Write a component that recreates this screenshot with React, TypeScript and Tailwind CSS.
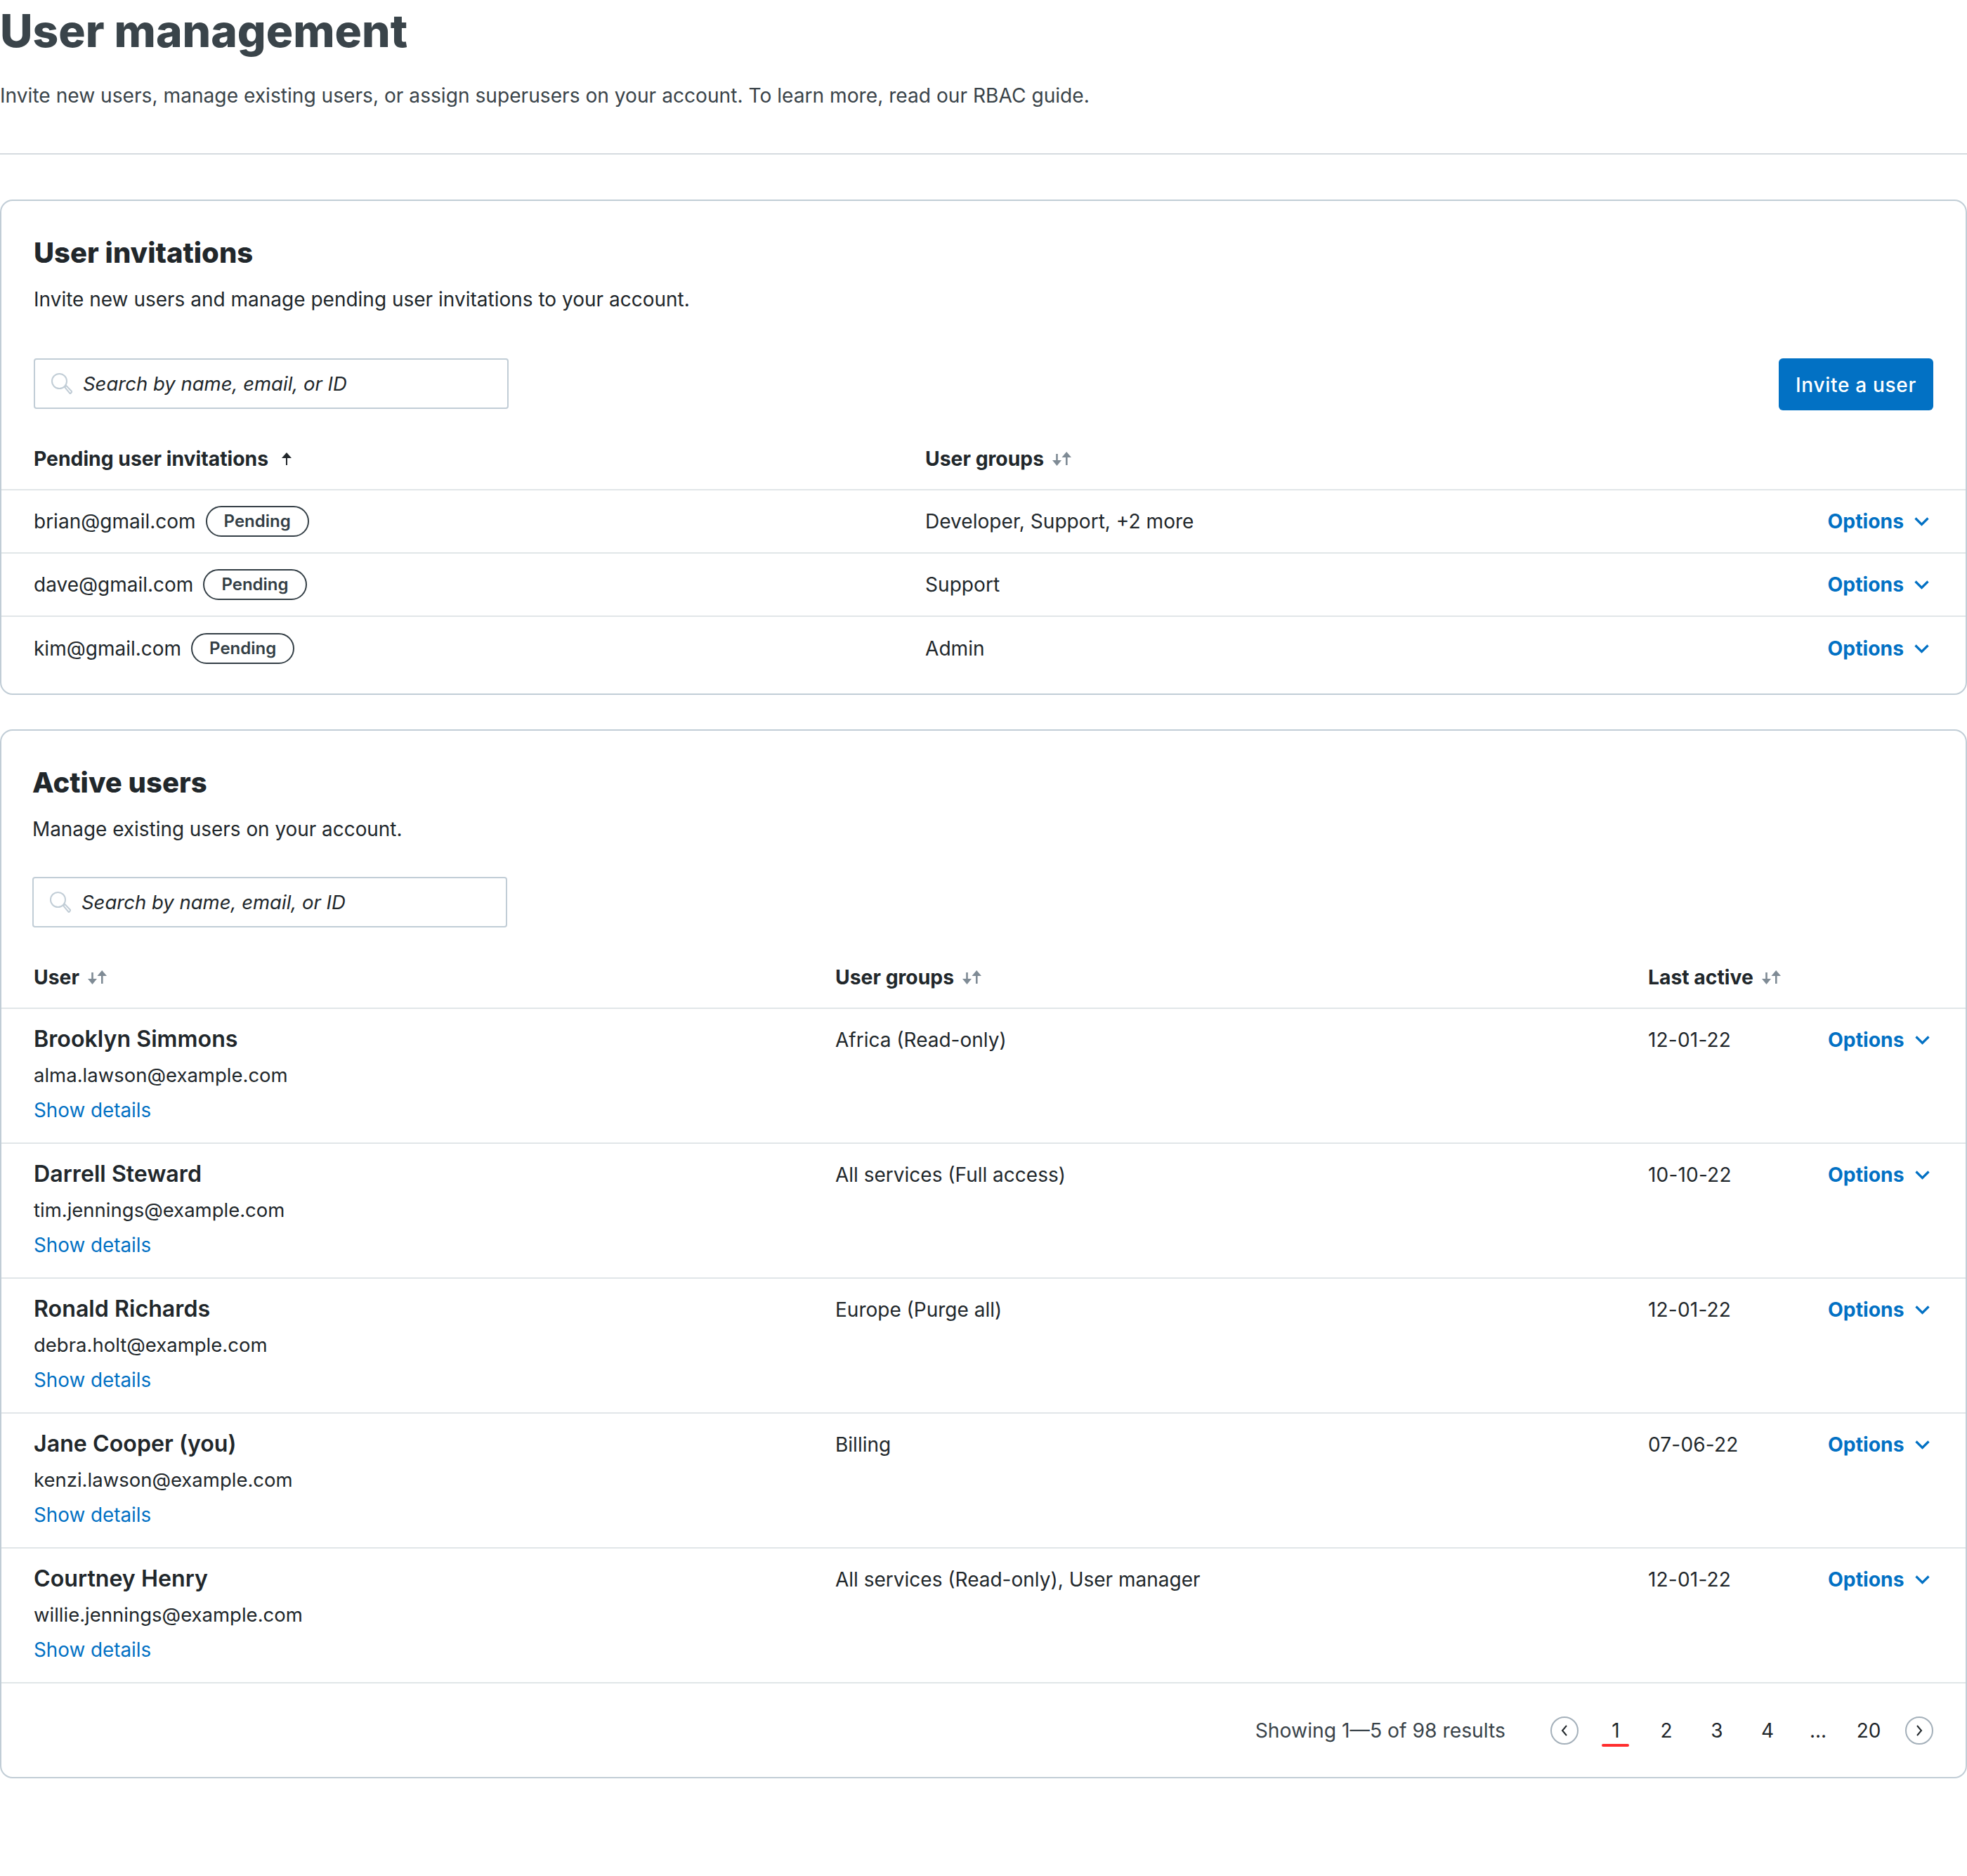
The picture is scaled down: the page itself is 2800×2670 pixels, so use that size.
const invitations = [
  { email: 'brian@gmail.com', groups: 'Developer, Support, +2 more' },
  { email: 'dave@gmail.com', groups: 'Support' },
  { email: 'kim@gmail.com', groups: 'Admin' },
];

const users = [
  { name: 'Brooklyn Simmons', email: 'alma.lawson@example.com', groups: 'Africa (Read-only)', last: '12-01-22' },
  { name: 'Darrell Steward', email: 'tim.jennings@example.com', groups: 'All services (Full access)', last: '10-10-22' },
  { name: 'Ronald Richards', email: 'debra.holt@example.com', groups: 'Europe (Purge all)', last: '12-01-22' },
  { name: 'Jane Cooper (you)', email: 'kenzi.lawson@example.com', groups: 'Billing', last: '07-06-22' },
  { name: 'Courtney Henry', email: 'willie.jennings@example.com', groups: 'All services (Read-only), User manager', last: '12-01-22' },
];

const SortIcon = () => (
  <svg width="27" height="20" viewBox="0 0 27 20" fill="#7f8b95" className="shrink-0">
    <path d="M5.2 3h2.600v9H13l-6.500 8L0 12h5.200z" />
    <path d="M19 19V8h-5.500L20.200 0 27 8h-5.400v11z" />
  </svg>
);

const UpArrow = () => (
  <svg width="16" height="18" viewBox="0 0 16 18" fill="#21272b" className="shrink-0">
    <path d="M7 18V8H1l7-8 7 8H9v10z" />
  </svg>
);

const Chevron = () => (
  <svg width="21" height="14" viewBox="0 0 21 14" fill="none" stroke="#0271c4" strokeWidth="3.2" className="shrink-0">
    <path d="M1.500 2.500 10.500 11.500l9-9" />
  </svg>
);

const Options = () => (
  <div className="flex items-center gap-[15px] text-[28.3px] font-bold text-[#0271c4]">
    Options
    <Chevron />
  </div>
);

const Search = () => (
  <div className="flex h-[72px] w-[676px] items-center rounded-[4px] border-2 border-[#c1cdd6] bg-white pl-[23px]">
    <svg width="30" height="30" viewBox="0 0 30 30" fill="none" stroke="#c1cdd6" strokeWidth="2" className="shrink-0">
      <circle cx="11.5" cy="11.5" r="10.5" />
      <path d="M19 20l2.500-2 8 8.500-2.500 3z" />
    </svg>
    <span className="ml-[15px] pt-[2px] text-[27.5px] italic text-[#21272b]">Search by name, email, or ID</span>
  </div>
);

const Pending = () => (
  <span className="flex h-[44px] items-center rounded-full border-2 border-[#333e45] px-[24px] text-[24px] font-semibold text-[#333e45]">
    Pending
  </span>
);

const PageButton = ({ dir }: { dir: 'left' | 'right' }) => (
  <div className="flex h-[40px] w-[40px] items-center justify-center rounded-full border-2 border-[#a4b0ba]">
    <svg width="12" height="20" viewBox="0 0 12 20" fill="none" stroke="#21272b" strokeWidth="2">
      <path d={dir === 'left' ? 'M9 3 3 10l6 7' : 'M3 3l6 7-6 7'} />
    </svg>
  </div>
);

export default function App() {
  return (
    <div className="h-[2670px] w-[2800px] bg-white font-['Inter',sans-serif] text-[#21272b]">
      <h1 className="text-[64px] leading-[88px] font-extrabold text-[#3a444a]">User management</h1>
      <p className="mt-[26px] text-[28.15px] leading-[44px] text-[#3a444a]">
        Invite new users, manage existing users, or assign superusers on your account. To learn more, read our RBAC guide.
      </p>
      <div className="mt-[60px] h-[2px] bg-[#d5dbe0]" />

      <section className="mt-[64px] h-[705px] rounded-[18px] border-2 border-[#c1cdd6]">
        <div className="pt-[44px] pr-[46px] pl-[46px]">
          <h2 className="text-[40px] leading-[60px] font-extrabold">User invitations</h2>
          <p className="mt-[14px] text-[28px] leading-[44px]">Invite new users and manage pending user invitations to your account.</p>
          <div className="mt-[62px] flex items-start justify-between">
            <Search />
            <button className="h-[74px] w-[220px] rounded-[6px] bg-[#0271c4] pt-[2px] text-[28px] font-medium tracking-[0.7px] text-white">Invite a user</button>
          </div>
        </div>
        <div className="mt-[44px] flex h-[70px] items-center border-b-2 border-[#e1e6e8] pb-[18px] pl-[46px] text-[28.3px] font-bold">
          <div className="flex w-[1269px] items-center gap-[18px]">
            Pending user invitations
            <UpArrow />
          </div>
          <div className="flex items-center gap-[12px]">
            User groups
            <SortIcon />
          </div>
        </div>
        {invitations.map((row, i) => (
          <div
            key={row.email}
            className={`flex h-[90px] items-center pr-[52px] pl-[46px] text-[28px] ${i < 2 ? 'border-b-2 border-[#e1e6e8]' : ''}`}
          >
            <div className="flex w-[1269px] items-center gap-[14px]">
              {row.email}
              <Pending />
            </div>
            <div className="flex-1 text-[28.1px]">{row.groups}</div>
            <Options />
          </div>
        ))}
      </section>

      <section className="mt-[49px] h-[1493px] rounded-[18px] border-2 border-[#c1cdd6]">
        <div className="pt-[44px] pl-[44px]">
          <h2 className="text-[40px] leading-[60px] font-extrabold">Active users</h2>
          <p className="mt-[14px] text-[27.9px] leading-[44px]">Manage existing users on your account.</p>
          <div className="mt-[46px]">
            <Search />
          </div>
        </div>
        <div className="mt-[46px] grid h-[70px] grid-cols-[1141px_1157px_1fr] items-center border-b-2 border-[#e1e6e8] pb-[18px] pl-[46px] text-[28.3px] font-bold">
          <div className="flex items-center gap-[12px]">User <SortIcon /></div>
          <div className="flex items-center gap-[12px]">User groups <SortIcon /></div>
          <div className="flex items-center gap-[12px]">Last active <SortIcon /></div>
        </div>
        {users.map(user => (
          <div
            key={user.email}
            className="grid h-[192px] grid-cols-[1141px_1157px_256px_1fr] border-b-2 border-[#e1e6e8] pt-[21px] pl-[46px] text-[28px] leading-[44px]"
          >
            <div className="flex flex-col">
              <span className="text-[32.200px] font-semibold">{user.name}</span>
              <span className="mt-[7px] text-[27.500px]">{user.email}</span>
              <span className="mt-[6px] text-[27.800px] text-[#0271c4]">Show details</span>
            </div>
            <div className="pt-[1px]">{user.groups}</div>
            <div className="pt-[1px] tracking-[0.2px]">{user.last}</div>
            <div className="pt-[1px]">
              <Options />
            </div>
          </div>
        ))}
        <div className="flex h-[134px] items-center justify-end pr-[46px] text-[28px]">
          <span className="mr-[64px] text-[28.3px] text-[#3a444a]">Showing 1—5 of 98 results</span>
          <PageButton dir="left" />
          <div className="relative ml-[17px] w-[72px] text-center">
            1
            <div className="absolute bottom-[-2px] left-[16px] h-[4px] w-[39px] rounded-full bg-[#ff2d2d]" />
          </div>
          <div className="w-[72px] text-center">2</div>
          <div className="w-[72px] text-center">3</div>
          <div className="w-[72px] text-center">4</div>
          <div className="w-[72px] text-center">...</div>
          <div className="w-[72px] text-center">20</div>
          <div className="ml-[16px]"><PageButton dir="right" /></div>
        </div>
      </section>
    </div>
  );
}
